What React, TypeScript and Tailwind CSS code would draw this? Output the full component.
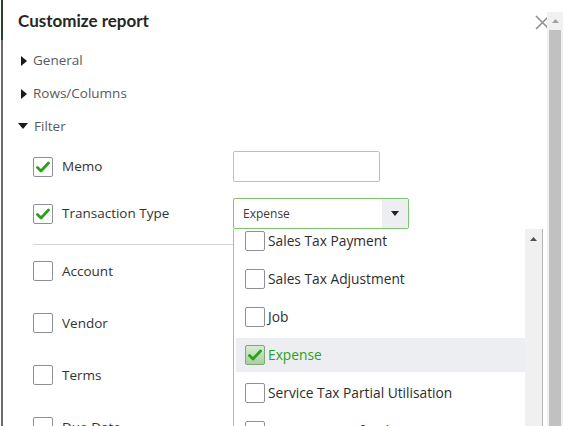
import React from "react";

const ui = { fontFamily: "Lato, 'Noto Sans', sans-serif" };
const body = { fontFamily: "'Open Sans', 'Noto Sans', sans-serif" };

const sections = [
  { label: "General", open: false },
  { label: "Rows/Columns", open: false },
  { label: "Filter", open: true },
];

const txnTypes = [
  { label: "Sales Tax Payment", checked: false },
  { label: "Sales Tax Adjustment", checked: false },
  { label: "Job", checked: false },
  { label: "Expense", checked: true },
  { label: "Service Tax Partial Utilisation", checked: false },
  { label: "Service Tax Refund", checked: false },
];

const plainFilters = ["Account", "Vendor", "Terms", "Due Date"];

function Tick() {
  return (
    <svg width="14" height="12" viewBox="0 0 14 12">
      <path d="M1.5 6.5 L5 10 L12.5 2" fill="none" stroke="#2ca01c" strokeWidth="2.8" strokeLinecap="round" strokeLinejoin="round" />
    </svg>
  );
}

function Check({ checked }: { checked: boolean }) {
  return (
    <div className="w-[20px] h-[20px] shrink-0 border border-[#8d9096] rounded-[2px] bg-white flex items-center justify-center">
      {checked && <Tick />}
    </div>
  );
}

function Caret({ open }: { open: boolean }) {
  return open ? (
    <svg width="11" height="7" viewBox="0 0 11 7" className="mr-[5px] ml-[-3px]">
      <path d="M0 0 H10 L5 6 Z" fill="#1a1a1a" />
    </svg>
  ) : (
    <svg width="6" height="10" viewBox="0 0 6 10" className="mr-[6px]">
      <path d="M0 0 L6 5 L0 10 Z" fill="#1a1a1a" />
    </svg>
  );
}

function TypeList() {
  return (
    <div className="absolute left-0 top-[31px] w-[310px] h-[220px] bg-white border-x border-[#b5b5b5] flex overflow-hidden z-10 font-normal" style={body}>
      <div className="flex-1 overflow-hidden">
        <div className="mt-[-7px]">
          {txnTypes.map((t) => (
            <div key={t.label} className="h-[38px] py-[2px] pl-[2px]">
              <div className={`h-[34px] flex items-center pl-[9px] ${t.checked ? "bg-[#eceef1]" : ""}`}>
                {t.checked ? (
                  <div className="w-[20px] h-[20px] shrink-0 border border-[#7fa876] rounded-[2px] bg-gradient-to-b from-[#d9ecd3] to-[#a9cf9f] flex items-center justify-center">
                    <Tick />
                  </div>
                ) : (
                  <Check checked={false} />
                )}
                <span className={`ml-[3px] text-[13.75px] ${t.checked ? "text-[#2ca01c]" : "text-[#2d2d2d]"}`}>{t.label}</span>
              </div>
            </div>
          ))}
        </div>
      </div>
      {/* list scrollbar */}
      <div className="w-[17px] bg-[#f0f0f0] flex justify-center pt-[8px]">
        <svg width="7" height="4" viewBox="0 0 7 4">
          <path d="M0 4 L3.5 0 L7 4 Z" fill="#505050" />
        </svg>
      </div>
    </div>
  );
}

export default function App() {
  return (
    <div className="w-[565px] h-[426px] flex overflow-hidden bg-white text-[#393a3d]" style={ui}>
      {/* page behind the drawer */}
      <div className="w-[3px] shrink-0 flex flex-col pl-px">
        <div className="h-[40px] bg-[#24412c]" />
        <div className="flex-1 bg-[#6b6b6b]" />
      </div>

      <div className="flex-1 min-w-0">
        <div className="h-[20px] mt-[11px] pl-[15px] flex items-center justify-between">
          <h1 className="text-[17px] font-bold text-[#262626]">Customize report</h1>
          <svg width="15" height="15" viewBox="0 0 15 15" className="mr-[-3px] mt-[2px]">
            <path d="M1 1 L14 14 M14 1 L1 14" stroke="#8d9096" strokeWidth="1.6" />
          </svg>
        </div>

        <div className="mt-[13px] pl-[18px]" style={body}>
          {sections.map((s) => (
            <div key={s.label} className="h-[33px] flex items-center text-[13.5px] text-[#5a5a5a]">
              <Caret open={s.open} />
              {s.label}
            </div>
          ))}
        </div>

        <div className="pl-[30px] text-[13.5px] font-medium text-[#333]" style={body}>
          <div className="h-[47px] flex items-center">
            <Check checked />
            <span className="ml-[9px] w-[171px]">Memo</span>
            <div className="w-[147px] h-[31px] border border-[#babec5] rounded-[2px]" />
          </div>
          <div className="h-[47px] flex items-center">
            <Check checked />
            <span className="ml-[9px] w-[171px]">Transaction Type</span>
            <div className="relative">
              <div className="w-[176px] h-[31px] border border-[#7dc46c] rounded-[2px] flex">
                <span className="flex-1 pl-[9px] flex items-center text-[12px] font-normal text-[#393a3d]">Expense</span>
                <div className="w-[26px] bg-[#eceef1] flex items-center justify-center">
                  <svg width="8" height="5" viewBox="0 0 8 5">
                    <path d="M0 0 H8 L4 5 Z" fill="#222" />
                  </svg>
                </div>
              </div>
              <TypeList />
            </div>
          </div>
          <div className="mt-[7px] h-px w-[500px] bg-[#d4d7dc]" />
          {plainFilters.map((f) => (
            <div key={f} className="h-[52px] flex items-center">
              <Check checked={false} />
              <span className="ml-[9px]">{f}</span>
            </div>
          ))}
        </div>
      </div>

      {/* drawer scrollbar */}
      <div className="w-[16px] shrink-0 pt-[12px] flex flex-col">
        <div className="flex-1 bg-[#f1f1f1] flex flex-col">
          <div className="h-[18px] flex items-center justify-center">
            <svg width="7" height="4" viewBox="0 0 7 4">
              <path d="M0 4 L3.5 0 L7 4 Z" fill="#a3a3a3" />
            </svg>
          </div>
          <div className="flex-1 mx-[2px] bg-[#c1c1c1]" />
        </div>
      </div>
      <div className="w-[2px] shrink-0" />
    </div>
  );
}
